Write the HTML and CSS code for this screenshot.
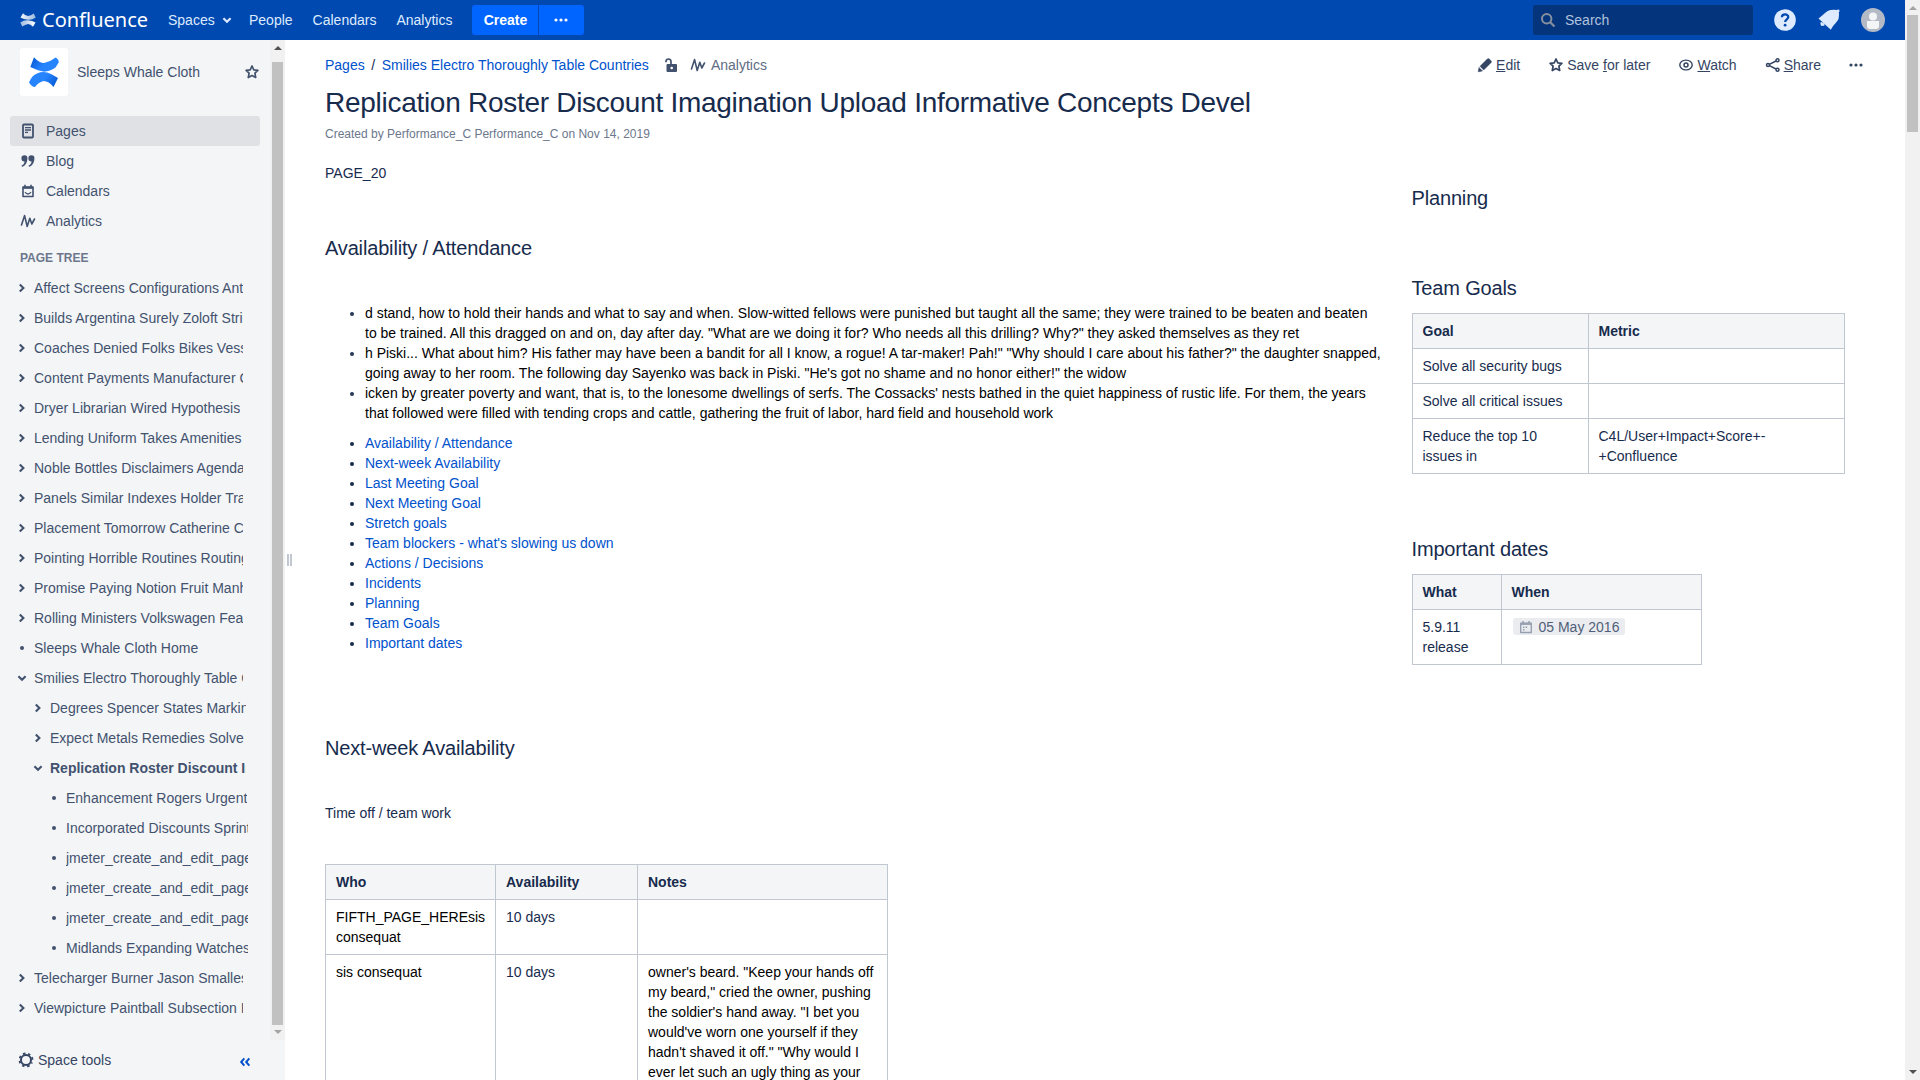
FILE: index.html
```html
<!DOCTYPE html>
<html lang="en">
<head>
<meta charset="utf-8">
<title>Replication Roster Discount Imagination - Confluence</title>
<link rel="stylesheet" href="styles.css">
</head>
<body>
<svg class="defs" aria-hidden="true">
  <linearGradient id="w-top" x1="0" y1="0" x2="1" y2="0"><stop offset="0" stop-color="#fff" stop-opacity=".95"/><stop offset="1" stop-color="#fff" stop-opacity=".6"/></linearGradient>
  <linearGradient id="w-bot" x1="0" y1="0" x2="1" y2="0"><stop offset="0" stop-color="#fff" stop-opacity=".6"/><stop offset="1" stop-color="#fff"/></linearGradient>
  <linearGradient id="g-a" x1="0" y1="0" x2="1" y2=".4"><stop offset="0" stop-color="#0052cc"/><stop offset=".6" stop-color="#2684ff"/></linearGradient>
  <linearGradient id="g-b" x1="1" y1="1" x2="0" y2=".6"><stop offset="0" stop-color="#0052cc"/><stop offset=".6" stop-color="#2684ff"/></linearGradient>
  <symbol id="right" viewBox="0 0 10 10"><path d="M2.800 1.400 6.400 5 2.800 8.600" fill="none" stroke="currentColor" stroke-width="2.100"/></symbol>
  <symbol id="down" viewBox="0 0 10 10"><path d="M1.400 3.200 5 6.800 8.600 3.200" fill="none" stroke="currentColor" stroke-width="2.100"/></symbol>
  <symbol id="dot" viewBox="0 0 10 10"><circle cx="5" cy="5" r="2" fill="currentColor"/></symbol>
  <symbol id="star" viewBox="0 0 16 16"><path d="M8 2l1.800 3.800 4.100.5-3 2.900.8 4.300L8 11.500l-3.700 2 .8-4.300-3-2.900 4.100-.5z" fill="none" stroke="currentColor" stroke-width="1.700" stroke-linejoin="round"/></symbol>
  <symbol id="wave" viewBox="0 0 16 16"><path d="M1.500 12 4.600 2.600 7.200 13.500 9.800 5.200 11.800 11 14.500 6" fill="none" stroke="currentColor" stroke-width="1.600" stroke-linecap="round" stroke-linejoin="round"/></symbol>
  <symbol id="more" viewBox="0 0 16 16"><g fill="currentColor"><circle cx="3" cy="8" r="1.600"/><circle cx="8" cy="8" r="1.600"/><circle cx="13" cy="8" r="1.600"/></g></symbol>
</svg>

<div class="page">
  <header class="header">
    <a class="logo">
      <svg width="16" height="16" viewBox="0 0 32 32"><path fill="url(#w-top)" d="M6 2.500Q11 8 16 8Q22 7 27.500 3L31.500 11Q24 16.500 16 15.500Q7 15 1 11z"/><path fill="url(#w-bot)" d="M26 29.500Q21 24 16 24Q10 25 4.500 29L.5 21Q8 15.500 16 16.500Q25 17 31 21z"/></svg>
      <span>Confluence</span>
    </a>
    <nav class="nav">
      <a class="spaces">Spaces<svg width="10" height="10"><use href="#down"/></svg></a>
      <a>People</a><a>Calendars</a><a>Analytics</a>
    </nav>
    <div class="create"><button class="c-main">Create</button><button class="c-more"><svg width="16" height="16"><use href="#more"/></svg></button></div>
    <div class="search">
      <svg width="16" height="16" viewBox="0 0 16 16" fill="none" stroke="currentColor"><circle cx="6.700" cy="6.700" r="4.700" stroke-width="2"/><path d="M10.200 10.200 14.500 14.500" stroke-width="2.200"/></svg>
      <span>Search</span>
    </div>
    <svg class="h-ico" width="24" height="24" viewBox="0 0 24 24"><circle cx="12" cy="12" r="10.800" fill="#deebff"/><path d="M8.900 9.300c0-4 6.400-3.900 6.400-.2 0 2.200-3.200 2.400-3.200 5" fill="none" stroke="#0049b0" stroke-width="2.200"/><circle cx="12.100" cy="17.200" r="1.400" fill="#0049b0"/></svg>
    <svg class="h-ico" width="24" height="24" viewBox="0 0 24 24" fill="#deebff"><path d="M1.500 10.500C6 7.500 9 3 13.500 2q4.500-.8 8 .2 1 4 .2 8C20.500 14 16 17 13.800 21.800z"/><path d="M3.700 13.900Q2.900 17 4.800 17.900L7.600 17.600Q7.800 14.500 3.700 13.900z"/><circle cx="21.200" cy="2.900" r="1.300"/></svg>
    <svg class="h-ico" width="24" height="24" viewBox="0 0 24 24"><circle cx="12" cy="12" r="12" fill="#b3bac5"/><circle cx="12" cy="8.500" r="4" fill="#f4f5f7"/><path d="M6 13h12v5q0 3-3 3H9q-3 0-3-3z" fill="#f4f5f7"/></svg>
  </header>

  <div class="main">
    <aside class="sidebar">
      <div class="side-scroll">
        <div class="side-body">
          <div class="space">
            <div class="space-logo"><svg width="32" height="32" viewBox="0 0 32 32"><path fill="url(#g-a)" d="M6 1.200Q11 7 16 7Q22 6 27.600 1.500Q31 3.500 30.700 6.500L27.500 11.500Q22 15.500 16 15.700Q9 14.500 2.300 11z"/><path fill="url(#g-b)" d="M25.500 31Q21 25 15.500 25Q10 26.500 7 31Q4 31 1 26.500Q4 19 9 17.500Q16 14.500 23 18L30 22z"/></svg></div>
            <span>Sleeps Whale Cloth</span>
            <svg class="fav" width="16" height="16"><use href="#star"/></svg>
          </div>
          <ul class="menu">
            <li class="on"><svg width="16" height="16" viewBox="0 0 16 16"><rect x="3" y="1.500" width="10" height="13" rx="1" fill="none" stroke="currentColor" stroke-width="1.800"/><path d="M5 4.700h6M5 7h6M5 9.300h3" stroke="currentColor" stroke-width="1.300"/></svg>Pages</li>
            <li><svg width="16" height="16" viewBox="0 0 16 16" fill="currentColor"><path d="M4.400 2.200a3 3 0 0 1 3 3.200c0 4-2.200 7.500-5.400 8.400l-.5-1.200c1.900-.9 2.900-2.400 3.100-4.200a3.100 3.100 0 1 1-.2-6.200zM11.400 2.200a3 3 0 0 1 3 3.200c0 4-2.200 7.500-5.400 8.400l-.5-1.200c1.900-.9 2.900-2.400 3.100-4.200a3.100 3.100 0 1 1-.2-6.200z"/></svg>Blog</li>
            <li><svg width="16" height="16" viewBox="0 0 16 16" fill="none" stroke="currentColor"><path d="M3 4.500h10v9H3z" stroke-width="1.600" stroke-linejoin="round"/><path d="M2.500 4.500h11" stroke-width="2.600"/><path d="M5 1.700v2M11 1.700v2" stroke-width="1.600"/><path d="M5 9.200q3 3.600 6 0" stroke-width="1.300"/></svg>Calendars</li>
            <li><svg width="16" height="16"><use href="#wave"/></svg>Analytics</li>
          </ul>
          <h5>PAGE TREE</h5>
          <ul class="tree">
            <li><svg><use href="#right"/></svg><span>Affect Screens Configurations Anthony</span></li>
            <li><svg><use href="#right"/></svg><span>Builds Argentina Surely Zoloft Strip</span></li>
            <li><svg><use href="#right"/></svg><span>Coaches Denied Folks Bikes Vessel</span></li>
            <li><svg><use href="#right"/></svg><span>Content Payments Manufacturer Clear</span></li>
            <li><svg><use href="#right"/></svg><span>Dryer Librarian Wired Hypothesis</span></li>
            <li><svg><use href="#right"/></svg><span>Lending Uniform Takes Amenities</span></li>
            <li><svg><use href="#right"/></svg><span>Noble Bottles Disclaimers Agenda</span></li>
            <li><svg><use href="#right"/></svg><span>Panels Similar Indexes Holder Trail</span></li>
            <li><svg><use href="#right"/></svg><span>Placement Tomorrow Catherine Clear</span></li>
            <li><svg><use href="#right"/></svg><span>Pointing Horrible Routines Routing</span></li>
            <li><svg><use href="#right"/></svg><span>Promise Paying Notion Fruit Manhattan</span></li>
            <li><svg><use href="#right"/></svg><span>Rolling Ministers Volkswagen Features</span></li>
            <li><svg><use href="#dot"/></svg><span>Sleeps Whale Cloth Home</span></li>
            <li><svg><use href="#down"/></svg><span>Smilies Electro Thoroughly Table Countries</span></li>
            <li class="l1"><svg><use href="#right"/></svg><span>Degrees Spencer States Marking</span></li>
            <li class="l1"><svg><use href="#right"/></svg><span>Expect Metals Remedies Solve</span></li>
            <li class="l1 cur"><svg><use href="#down"/></svg><span>Replication Roster Discount Imagination</span></li>
            <li class="l2"><svg><use href="#dot"/></svg><span>Enhancement Rogers Urgent</span></li>
            <li class="l2"><svg><use href="#dot"/></svg><span>Incorporated Discounts Sprint</span></li>
            <li class="l2"><svg><use href="#dot"/></svg><span>jmeter_create_and_edit_page</span></li>
            <li class="l2"><svg><use href="#dot"/></svg><span>jmeter_create_and_edit_page</span></li>
            <li class="l2"><svg><use href="#dot"/></svg><span>jmeter_create_and_edit_page</span></li>
            <li class="l2"><svg><use href="#dot"/></svg><span>Midlands Expanding Watches</span></li>
            <li><svg><use href="#right"/></svg><span>Telecharger Burner Jason Smallest</span></li>
            <li><svg><use href="#right"/></svg><span>Viewpicture Paintball Subsection Index</span></li>
          </ul>
        </div>
        <div class="bar bar-side"><i class="up dark"></i><b></b><i class="dn"></i></div>
      </div>
      <div class="side-foot">
        <svg width="16" height="16" viewBox="0 0 16 16" fill="none" stroke="currentColor"><circle cx="8" cy="8" r="5" stroke-width="2"/><circle cx="8" cy="8" r="6.500" stroke-width="1.800" stroke-dasharray="2.500 2.605" stroke-dashoffset="1.250" transform="rotate(22.500 8 8)"/></svg>
        <span>Space tools</span>
        <svg class="collapse" width="12" height="12" viewBox="0 0 12 12" fill="none" stroke="currentColor" stroke-width="2"><path d="M5.300 2.400 2.200 6l3.100 3.600M10.300 2.400 7.200 6l3.100 3.600"/></svg>
      </div>
    </aside>
    <div class="handle"><i></i><i></i></div>

    <main class="content">
      <div class="top">
        <nav class="crumbs">
          <a>Pages</a><em>/</em><a>Smilies Electro Thoroughly Table Countries</a>
          <svg class="lock" width="16" height="16" viewBox="0 0 16 16"><rect x="3.500" y="7" width="10.500" height="8" rx="1" fill="currentColor"/><circle cx="8.700" cy="11" r="1.300" fill="#fff"/><path d="M3 5.200V4.500Q3.200 2 5.500 2T8 4.500V8" fill="none" stroke="currentColor" stroke-width="1.700"/></svg>
          <svg class="wv" width="16" height="16"><use href="#wave"/></svg><span>Analytics</span>
        </nav>
        <div class="tools">
          <a><svg width="16" height="16" viewBox="0 0 16 16" fill="currentColor"><path d="M1.200 14.800 2 10.500 5.500 14zM3 9.300 10.300 2q1-1 2 0l1.700 1.700q1 1 0 2L6.700 13z" stroke="currentColor" stroke-width=".5"/></svg><span><u>E</u>dit</span></a>
          <a><svg width="16" height="16"><use href="#star"/></svg><span>Save <u>f</u>or later</span></a>
          <a><svg width="16" height="16" viewBox="0 0 16 16" fill="none" stroke="currentColor"><ellipse cx="8" cy="8" rx="6.200" ry="4.900" stroke-width="1.400"/><circle cx="8" cy="8" r="2" stroke-width="1.500"/></svg><span><u>W</u>atch</span></a>
          <a><svg width="16" height="16" viewBox="0 0 16 16" fill="none" stroke="currentColor" stroke-width="1.500"><circle cx="3" cy="8" r="1.500"/><circle cx="12.500" cy="3.300" r="1.500"/><circle cx="12.500" cy="12.700" r="1.500"/><path d="M4.400 7.300 11 4M4.400 8.700 11 12"/></svg><span><u>S</u>hare</span></a>
          <a class="dots"><svg width="16" height="16"><use href="#more"/></svg></a>
        </div>
      </div>
      <h1>Replication Roster Discount Imagination Upload Informative Concepts Devel</h1>
      <p class="meta">Created by Performance_C Performance_C on Nov 14, 2019</p>
      <div class="cols">
        <section class="left">
          <p>PAGE_20</p>
          <h2 class="h-av">Availability / Attendance</h2>
          <ul class="story">
            <li><span>d stand, how to hold their hands and what to say and when. Slow-witted fellows were punished but taught all the same; they were trained to be beaten and beaten<br>to be trained. All this dragged on and on, day after day. "What are we doing it for? Who needs all this drilling? Why?" they asked themselves as they ret</span></li>
            <li><span>h Piski... What about him? His father may have been a bandit for all I know, a rogue! A tar-maker! Pah!" "Why should I care about his father?" the daughter snapped,<br>going away to her room. The following day Sayenko was back in Piski. "He's got no shame and no honor either!" the widow</span></li>
            <li><span>icken by greater poverty and want, that is, to the lonesome dwellings of serfs. The Cossacks' nests bathed in the quiet happiness of rustic life. For them, the years<br>that followed were filled with tending crops and cattle, gathering the fruit of labor, hard field and household work</span></li>
          </ul>
          <ul class="toc">
            <li><a>Availability / Attendance</a></li><li><a>Next-week Availability</a></li><li><a>Last Meeting Goal</a></li><li><a>Next Meeting Goal</a></li><li><a>Stretch goals</a></li><li><a>Team blockers - what's slowing us down</a></li><li><a>Actions / Decisions</a></li><li><a>Incidents</a></li><li><a>Planning</a></li><li><a>Team Goals</a></li><li><a>Important dates</a></li>
          </ul>
          <h2 class="h-nw">Next-week Availability</h2>
          <p class="time">Time off / team work</p>
          <table class="t-who">
            <colgroup><col class="w170"><col class="w142"><col class="w250"></colgroup>
            <tr><th>Who</th><th>Availability</th><th>Notes</th></tr>
            <tr><td class="k">FIFTH_PAGE_HEREsis consequat</td><td>10 days</td><td></td></tr>
            <tr><td class="k">sis consequat</td><td>10 days</td><td class="k">owner's beard. "Keep your hands off<br>my beard," cried the owner, pushing<br>the soldier's hand away. "I bet you<br>would've worn one yourself if they<br>hadn't shaved it off." "Why would I<br>ever let such an ugly thing as your</td></tr>
          </table>
        </section>
        <section class="right">
          <h2 class="h-pl">Planning</h2>
          <h2 class="h-tg">Team Goals</h2>
          <table class="t-goal">
            <colgroup><col class="w176"><col class="w256"></colgroup>
            <tr><th>Goal</th><th>Metric</th></tr>
            <tr><td>Solve all security bugs</td><td></td></tr>
            <tr><td>Solve all critical issues</td><td></td></tr>
            <tr><td>Reduce the top 10<br>issues in</td><td>C4L/User+Impact+Score+-<br>+Confluence</td></tr>
          </table>
          <h2 class="h-id">Important dates</h2>
          <table class="t-date">
            <colgroup><col class="w89"><col class="w200"></colgroup>
            <tr><th>What</th><th>When</th></tr>
            <tr><td>5.9.11<br>release</td><td><span class="chip"><svg width="14" height="14" viewBox="0 0 14 14" fill="none" stroke="#97a0af"><path d="M1.700 3.500h10.600v9H1.700z" stroke-width="1.400" stroke-linejoin="round"/><path d="M1.500 3.700h11" stroke-width="2.400"/><path d="M4 1v2M10 1v2" stroke-width="1.500"/><path d="M4 7.200h1.500M6.700 7.200h1.500M4 9.700h1.500" stroke-width="1.400"/></svg>05 May 2016</span></td></tr>
          </table>
        </section>
      </div>
    </main>
  </div>
</div>
<div class="bar bar-page"><i class="up"></i><b></b><i class="dn dark"></i></div>
</body>
</html>
```
FILE: styles.css
```css
* { box-sizing: border-box; }
html, body { height: 100%; }
body { margin: 0; display: flex; overflow: hidden; height: 1080px; background: #fff; color: #172b4d; font: 14px/20px "Liberation Sans", Arial, sans-serif; }
h1, h2, h5, p, ul { margin: 0; padding: 0; font-weight: 400; }
ul { list-style: none; }
svg { flex: none; display: block; }
.defs { position: absolute; width: 0; height: 0; }
.page { width: 1905px; height: 1080px; display: flex; flex-direction: column; }

.header { height: 40px; flex: none; background: #0049b0; color: #deebff; display: flex; align-items: center; padding: 0 20px; }
.logo { display: flex; align-items: center; gap: 6px; width: 148px; color: #fff; }
.logo span { font: 20px/24px "Noto Sans", sans-serif; }
.nav { display: flex; gap: 20px; }
.spaces { display: flex; align-items: center; gap: 7px; width: 61px; }
.create { display: flex; gap: 1px; margin-left: 20px; }
.create button { height: 30px; border: 0; padding: 0; background: #0065ff; color: #fff; font: bold 14px/20px "Liberation Sans", Arial, sans-serif; display: flex; align-items: center; justify-content: center; }
.c-main { width: 66px; border-radius: 3px 0 0 3px; }
.create .c-more { width: 45px; border-radius: 0 3px 3px 0; padding-right: 7px; padding-left: 5px; }
.search { margin-left: auto; width: 220px; height: 30px; border-radius: 3px; background: #03347c; display: flex; align-items: center; padding-left: 7px; gap: 9px; color: #b0c2dd; margin-right: 20px; }
.search svg { color: #858f9f; }
.h-ico { margin-right: 20px; }
.h-ico:last-child { margin-right: 0; }

.main { flex: 1; display: flex; min-height: 0; }
.sidebar { width: 285px; flex: none; background: #f4f5f7; color: #42526e; display: flex; flex-direction: column; }
.side-scroll { height: 1000px; display: flex; }
.side-body { width: 270px; overflow: hidden; }
.space { display: flex; align-items: center; margin: 8px 10px 20px 20px; height: 48px; }
.space-logo { width: 48px; height: 48px; background: #fff; border-radius: 3px; display: flex; align-items: center; justify-content: center; margin-right: 9px; }
.fav { margin: 0 0 0 auto; }
.menu { margin: 0 10px; }
.menu li { height: 30px; border-radius: 3px; display: flex; align-items: center; gap: 10px; padding-left: 10px; }
.menu li.on { background: #dfe1e5; }
h5 { font: bold 12px/20px "Liberation Sans", Arial, sans-serif; color: #6b778c; margin: 12px 0 5px 20px; }
.tree li { height: 30px; display: flex; align-items: center; gap: 7px; padding-left: 17px; width: 243px; }
.tree svg { width: 10px; height: 10px; }
.tree span { overflow: hidden; white-space: nowrap; }
.tree .l1 { padding-left: 33px; width: 246px; }
.tree .l2 { padding-left: 49px; width: 248px; }
.cur { font-weight: bold; }
.side-foot { height: 40px; display: flex; align-items: center; gap: 4px; padding: 0 34px 0 18px; color: #344563; }
.collapse { margin: 4px 0 0 auto; color: #0052cc; }

.bar { width: 15px; background: #f1f1f1; display: flex; flex-direction: column; align-items: center; }
.bar b { width: 11px; background: #c1c1c1; }
.bar i { width: 0; height: 0; border: 4px solid transparent; }
.bar .up { border-top: 0; border-bottom-color: #a3a3a3; margin: 6px 0 5px; }
.bar .dn { border-bottom: 0; border-top-color: #a3a3a3; margin-top: auto; margin-bottom: 6px; }
.bar .up.dark { border-bottom-color: #505050; }
.bar .dn.dark { border-top-color: #505050; }
.bar-side .up { margin-bottom: 12px; }
.bar-side b { height: 963px; }
.bar-page { height: 1080px; }
.bar-page b { height: 117px; }

.handle { width: 8px; padding: 514px 0 0 2px; display: flex; gap: 1px; flex: none; }
.handle i { width: 2px; height: 12px; background: #c1c7d0; }

.content { flex: 1; padding: 0 40px 0 32px; overflow: hidden; }
.top { display: flex; justify-content: space-between; height: 20px; margin-top: 15px; }
.crumbs { display: flex; align-items: center; color: #5e6c84; }
.crumbs a, .toc a { color: #0052cc; }
.crumbs em { font-style: normal; width: 17px; text-align: center; color: #172b4d; }
.crumbs svg { color: #42526e; }
.lock { margin-left: 14px; }
.wv { margin: 0 5px 0 11px; }
.tools { display: flex; gap: 28px; color: #344563; }
.tools a { display: flex; align-items: center; gap: 3px; }
.tools .dots { margin: 0 1px 0 -1px; }
h1 { font-size: 28px; line-height: 32px; letter-spacing: -.28px; margin-top: 12px; white-space: nowrap; }
.meta { font-size: 12px; color: #6b778c; margin-top: 5px; }
.cols { display: flex; margin-top: 19px; }
.left { width: 1086.5px; flex: none; white-space: nowrap; }
.right { width: 434px; flex: none; }
h2 { font-size: 20px; line-height: 30px; letter-spacing: -.16px; }
.h-av { margin-top: 50px; }
.story, .toc { padding-left: 40px; list-style: disc; }
.story { margin-top: 40px; }
.story span, .k { color: #000; }
.story li::marker { color: #253858; }
.toc { margin-top: 10px; }
.h-nw { margin-top: 80px; }
.time { margin-top: 40px; }
table { border-collapse: collapse; table-layout: fixed; white-space: normal; }
th, td { border: 1px solid #c1c7d0; padding: 7px 10px; text-align: left; vertical-align: top; }
th { background: #f4f5f7; font-weight: bold; }
td { height: 35px; }
.t-who { width: 563px; margin-top: 41px; }
.t-goal { width: 433px; margin-top: 10px; }
.t-date { width: 290px; margin-top: 10px; }
.w170 { width: 170px; } .w142 { width: 142px; } .w250 { width: 250px; }
.w176 { width: 176px; } .w256 { width: 256px; } .w89 { width: 89px; } .w200 { width: 200px; }
.h-pl { margin-top: 20px; }
.h-tg { margin-top: 60px; }
.h-id { margin-top: 60px; }
.chip { display: inline-flex; align-items: center; gap: 6px; height: 17px; margin: 1px; padding: 0 6px; border-radius: 3px; background: #ebecf0; color: #505f79; vertical-align: top; }
```
